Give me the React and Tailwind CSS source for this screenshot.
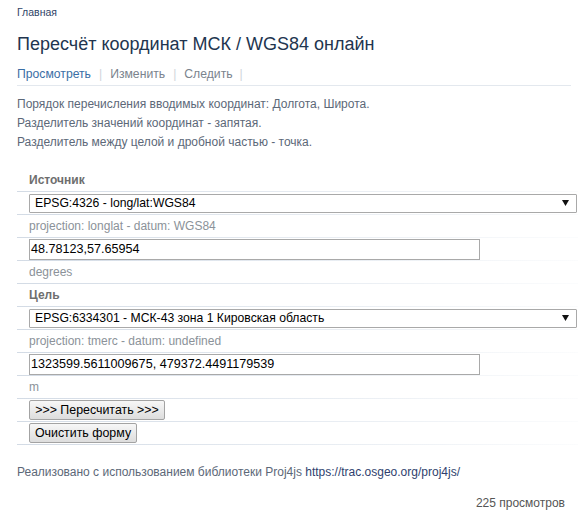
import React from 'react';

const Line = () => (
  <div className="h-px w-full bg-gradient-to-r from-[#d3dbe5] via-[#e6ebf1] to-[#fbfcfd]" />
);

const Row = ({ children }) => (
  <div>
    <div className="h-[22px] flex items-center pl-[12px] pr-[1px]">{children}</div>
    <Line />
  </div>
);

const Select = ({ value }) => (
  <div className="w-full h-[19px] border border-[#a9a9a9] rounded-[1px] bg-white flex items-center pl-[5px] pr-[7px] text-[12.2px] text-black">
    <span className="flex-1 leading-[15px]">{value}</span>
    <svg width="7" height="6" viewBox="0 0 7 6">
      <polygon points="0,0 7,0 3.5,6" fill="#111" />
    </svg>
  </div>
);

const Input = ({ value }) => (
  <div className="w-[451px] h-[21px] border border-[#a9a9a9] bg-white flex items-center pl-[1px] text-[12.6px] text-black leading-[15px]">
    {value}
  </div>
);

const Button = ({ children, w }) => (
  <button
    type="button"
    className={`${w} h-[20px] border border-[#a3a3a3] rounded-[2px] bg-gradient-to-b from-[#f7f7f7] to-[#dddddd] text-[12.4px] leading-[15px] text-black flex items-center justify-center`}
  >
    {children}
  </button>
);

const App = () => {
  return (
    <div className="w-[588px] h-[519px] bg-white overflow-hidden font-['Liberation_Sans',Arial,sans-serif] px-[17px]">
      <div className="pt-[6px] text-[10.5px] leading-[13px] text-[#2f4467]">Главная</div>

      <h1 className="mt-[13px] text-[18px] leading-[24px] text-[#22354f] font-normal">
        Пересчёт координат МСК / WGS84 онлайн
      </h1>

      <div className="mt-[10px] pb-[3px] border-b border-[#e3e8ee] flex items-center text-[12.2px] leading-[16px]">
        <span className="text-[#3a6ea5]">Просмотреть</span>
        <span className="mx-[8px] text-[#d0d5db]">|</span>
        <span className="text-[#7a838d]">Изменить</span>
        <span className="mx-[8px] text-[#d0d5db]">|</span>
        <span className="text-[#7a838d]">Следить</span>
        <span className="ml-[7px] text-[#d0d5db]">|</span>
      </div>

      <div className="mt-[9px] text-[12px] leading-[19px] text-[#5c6878]">
        <div>Порядок перечисления вводимых координат: Долгота, Широта.</div>
        <div>Разделитель значений координат - запятая.</div>
        <div>Разделитель между целой и дробной частью - точка.</div>
      </div>

      <div className="mt-[17px] w-[561px]">
        <Row>
          <span className="text-[12px] font-bold text-[#6e6e6e]">Источник</span>
        </Row>
        <Row>
          <Select value="EPSG:4326 - long/lat:WGS84" />
        </Row>
        <Row>
          <span className="text-[12px] text-[#8b9299]">projection: longlat - datum: WGS84</span>
        </Row>
        <Row>
          <Input value="48.78123,57.65954" />
        </Row>
        <Row>
          <span className="text-[12px] text-[#8b9299]">degrees</span>
        </Row>
        <Row>
          <span className="text-[12px] font-bold text-[#6e6e6e]">Цель</span>
        </Row>
        <Row>
          <Select value="EPSG:6334301 - МСК-43 зона 1 Кировская область" />
        </Row>
        <Row>
          <span className="text-[12px] text-[#8b9299]">projection: tmerc - datum: undefined</span>
        </Row>
        <Row>
          <Input value="1323599.5611009675, 479372.4491179539" />
        </Row>
        <Row>
          <span className="text-[12px] text-[#8b9299]">m</span>
        </Row>
        <Row>
          <Button w="w-[136px]">&gt;&gt;&gt; Пересчитать &gt;&gt;&gt;</Button>
        </Row>
        <Row>
          <Button w="w-[108px]">Очистить форму</Button>
        </Row>
      </div>

      <div className="mt-[19px] text-[12px] leading-[16px] text-[#5c6878]">
        Реализовано с использованием библиотеки Proj4js{' '}
        <a className="text-[#2f3f6e]">https://trac.osgeo.org/proj4js/</a>
      </div>

      <div className="mt-[15px] pr-[6px] text-right text-[12px] leading-[16px] text-[#555]">
        225 просмотров
      </div>
    </div>
  );
};

export default App;
